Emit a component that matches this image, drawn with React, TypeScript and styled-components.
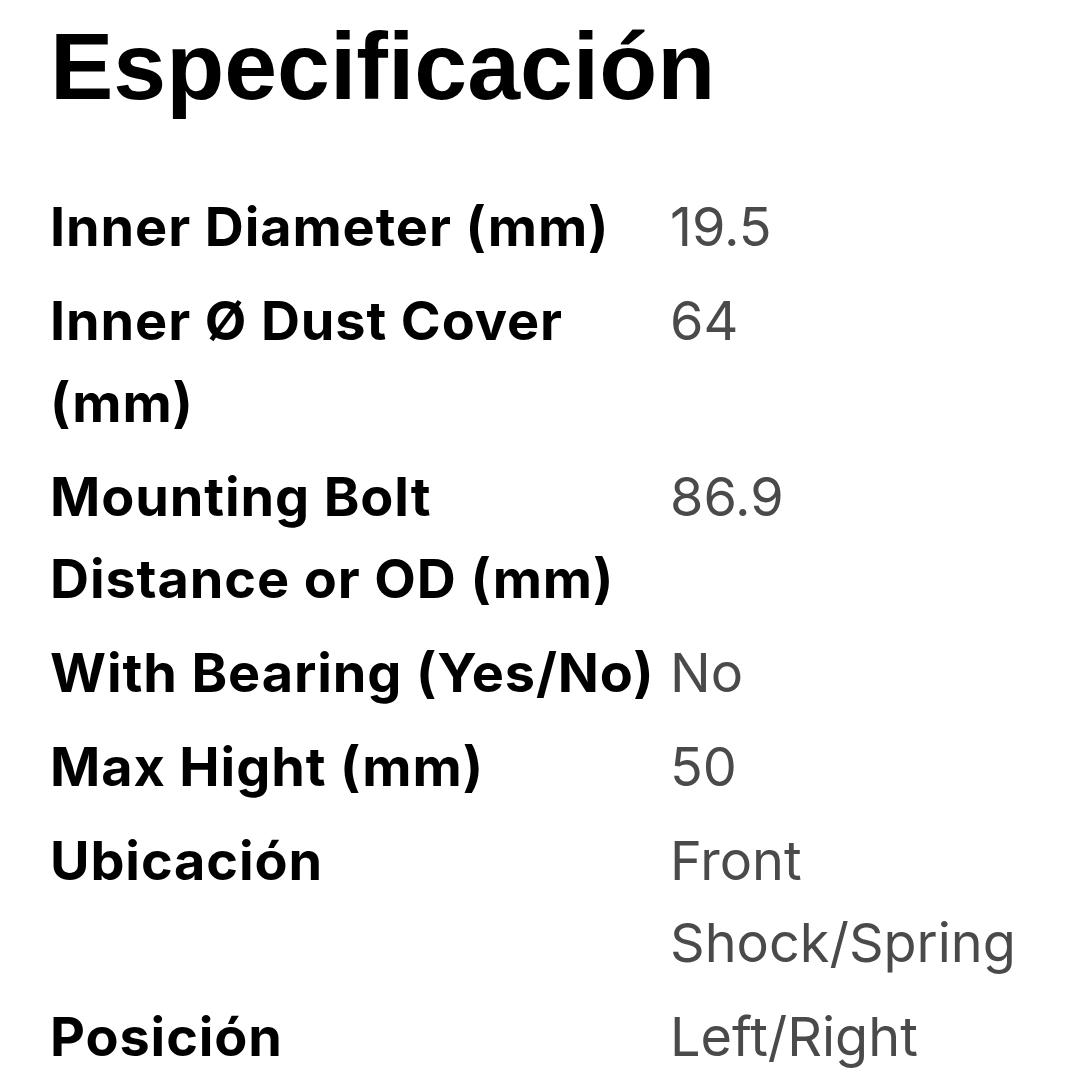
import styled, { createGlobalStyle } from "styled-components";

const specs = [
  { label: "Inner Diameter (mm)", value: "19.5" },
  { label: "Inner Ø Dust Cover (mm)", value: "64" },
  { label: "Mounting Bolt Distance or OD (mm)", value: "86.9" },
  { label: "With Bearing (Yes/No)", value: "No" },
  { label: "Max Hight (mm)", value: "50" },
  { label: "Ubicación", value: "Front Shock/Spring" },
  { label: "Posición", value: "Left/Right" },
];

const App = () => {
  return (
    <>
      <GlobalStyle />
      <Wrapper>
        <Title>Especificación</Title>
        <SpecGrid>
          {specs.map((spec) => (
            <Row key={spec.label}>
              <Label>{spec.label}</Label>
              <Value>{spec.value}</Value>
            </Row>
          ))}
        </SpecGrid>
      </Wrapper>
    </>
  );
};

export default App;

const GlobalStyle = createGlobalStyle`
  body {
    margin: 0;
    background: #ffffff;
  }
`;

const Wrapper = styled.div`
  width: 1080px;
  height: 1080px;
  padding: 19px 0 0 50px;
  box-sizing: border-box;
  overflow: hidden;
`;

const Title = styled.h1`
  margin: 0;
  font-family: "Liberation Sans", Arial, sans-serif;
  font-weight: 700;
  font-size: 95px;
  line-height: 95px;
  color: #000;
`;

const SpecGrid = styled.div`
  margin-top: 72px;
  display: flex;
  flex-direction: column;
  gap: 12px;
`;

const Row = styled.div`
  display: grid;
  grid-template-columns: 616px 1fr;
  column-gap: 4px;
  font-family: Inter, "Noto Sans", sans-serif;
  font-size: 54px;
  line-height: 82px;
`;

const Label = styled.div`
  font-weight: 700;
  letter-spacing: 0.9px;
  color: #000;
`;

const Value = styled.div`
  font-weight: 400;
  color: #4a4a4a;
`;
